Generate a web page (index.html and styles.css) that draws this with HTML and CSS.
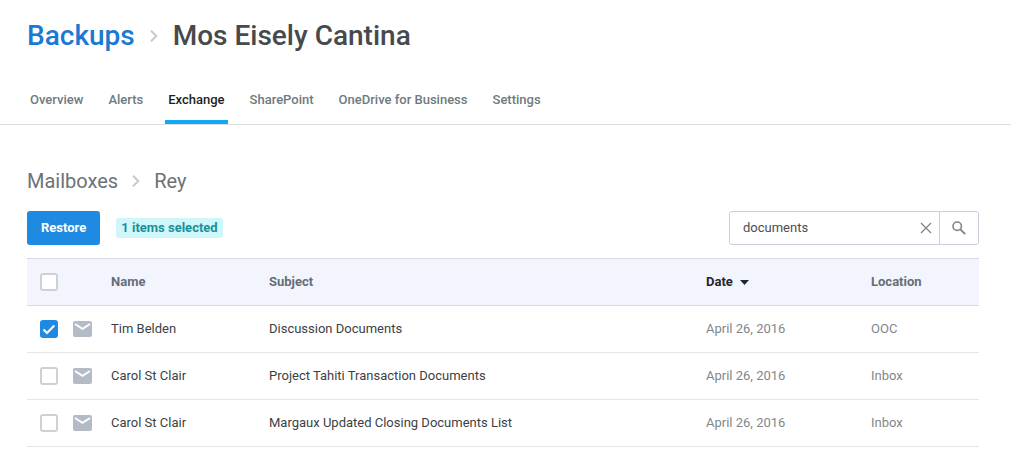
FILE: index.html
```html
<!DOCTYPE html>
<html lang="en">
<head>
    <meta charset="UTF-8">
    <meta name="viewport" content="width=device-width, initial-scale=1.0">
    <title>Mos Eisely Cantina - Exchange</title>
    <link rel="stylesheet" href="styles.css">
</head>
<body>
    <svg class="sprite" aria-hidden="true">
        <symbol id="chevron" viewBox="0 0 8 12">
            <path d="M1 .8L6.300 6 1 11.200" fill="none" stroke="currentColor" stroke-width="2"/>
        </symbol>
        <symbol id="mail" viewBox="0 0 19 16">
            <rect width="19" height="16" rx="2" fill="currentColor"/>
            <path d="M2 3l7.500 4.800L17 3" fill="none" stroke="#fff" stroke-width="1.900"/>
        </symbol>
    </svg>

    <header class="header">
        <div class="title">
            <a href="#">Backups</a>
            <svg class="chevron"><use href="#chevron"/></svg>
            <h1>Mos Eisely Cantina</h1>
        </div>
        <nav class="tabs">
            <a href="#">Overview</a>
            <a href="#">Alerts</a>
            <a href="#" class="active">Exchange</a>
            <a href="#">SharePoint</a>
            <a href="#">OneDrive for Business</a>
            <a href="#">Settings</a>
        </nav>
    </header>

    <main class="content">
        <div class="path">
            <a href="#">Mailboxes</a>
            <svg class="chevron"><use href="#chevron"/></svg>
            <h2>Rey</h2>
        </div>

        <div class="toolbar">
            <button type="button" class="restore-btn">Restore</button>
            <span class="selected">1 items selected</span>
            <form class="search">
                <input type="text" value="documents" aria-label="Search mailbox">
                <button type="button" class="clear-btn" aria-label="Clear">
                    <svg width="12" height="12" viewBox="0 0 12 12"><path d="M1 1l10 10M11 1L1 11" fill="none" stroke="currentColor" stroke-width="1.300"/></svg>
                </button>
                <button type="submit" class="search-btn" aria-label="Search">
                    <svg width="14" height="14" viewBox="0 0 14 14"><circle cx="5.200" cy="5.200" r="4.200" fill="none" stroke="currentColor" stroke-width="1.600"/><path d="M8.300 8.300l4.900 4.900" fill="none" stroke="currentColor" stroke-width="1.900"/></svg>
                </button>
            </form>
        </div>

        <table class="items">
            <thead>
                <tr>
                    <th class="col-check"><input type="checkbox" aria-label="Select all"></th>
                    <th class="col-icon"></th>
                    <th class="col-name">Name</th>
                    <th>Subject</th>
                    <th class="col-date sorted">Date <svg class="arrow" width="9" height="5" viewBox="0 0 9 5"><path d="M0 0h9L4.500 5z" fill="currentColor"/></svg></th>
                    <th class="col-location">Location</th>
                </tr>
            </thead>
            <tbody>
                <tr>
                    <td><input type="checkbox" aria-label="Select Discussion Documents" checked></td>
                    <td><svg class="mail"><use href="#mail"/></svg></td>
                    <td>Tim Belden</td>
                    <td>Discussion Documents</td>
                    <td class="muted">April 26, 2016</td>
                    <td class="muted">OOC</td>
                </tr>
                <tr>
                    <td><input type="checkbox" aria-label="Select Project Tahiti Transaction Documents"></td>
                    <td><svg class="mail"><use href="#mail"/></svg></td>
                    <td>Carol St Clair</td>
                    <td>Project Tahiti Transaction Documents</td>
                    <td class="muted">April 26, 2016</td>
                    <td class="muted">Inbox</td>
                </tr>
                <tr>
                    <td><input type="checkbox" aria-label="Select Margaux Updated Closing Documents List"></td>
                    <td><svg class="mail"><use href="#mail"/></svg></td>
                    <td>Carol St Clair</td>
                    <td>Margaux Updated Closing Documents List</td>
                    <td class="muted">April 26, 2016</td>
                    <td class="muted">Inbox</td>
                </tr>
            </tbody>
        </table>
    </main>
</body>
</html>
```
FILE: styles.css
```css
* {
    box-sizing: border-box;
}
body {
    margin: 0;
    background-color: #fff;
    color: #3c3f45;
    font-family: Roboto, "Liberation Sans", sans-serif;
    font-size: 13px;
    line-height: 16px;
}
a {
    color: inherit;
    text-decoration: none;
}
button, input {
    font: inherit;
}
svg {
    display: block;
}
.sprite {
    display: none;
}
.header {
    padding: 20px 27px 0;
    border-bottom: 1px solid #dcdee0;
}
.title {
    display: flex;
    align-items: center;
    gap: 15px;
    font-size: 28px;
    font-weight: 500;
    line-height: 32px;
}
.title a {
    color: #1a79d4;
}
.title h1 {
    margin: 0;
    font: inherit;
    color: #46494d;
}
.chevron {
    width: 8px;
    height: 12px;
    color: #c6cbd0;
}
.tabs {
    display: flex;
    gap: 19px;
    margin-top: 40px;
    font-weight: 500;
    color: #6f7a80;
}
.tabs a {
    padding: 0 3px 12px;
    border-bottom: 4px solid transparent;
}
.tabs .active {
    color: #1c1e21;
    border-color: #0fa9f5;
}
.content {
    padding: 44px 32px 23px 27px;
}
.path {
    display: flex;
    align-items: center;
    gap: 14px;
    font-size: 20px;
    line-height: 24px;
    color: #6c7278;
}
.path h2 {
    margin: 0;
    font: inherit;
}
.toolbar {
    display: flex;
    align-items: center;
    margin-top: 18px;
}
.restore-btn {
    height: 34px;
    padding: 0 14px;
    background-color: #1e8ae2;
    color: #fff;
    font-weight: 700;
    border: none;
    border-radius: 3px;
}
.selected {
    margin-left: 16px;
    padding: 2px 5px;
    background-color: #cff7fa;
    color: #1a8f9a;
    font-weight: 700;
    border-radius: 3px;
}
.search {
    display: flex;
    width: 250px;
    height: 34px;
    margin-left: auto;
    border: 1px solid #c8cfda;
    border-radius: 3px;
}
.search input {
    flex: 1;
    min-width: 0;
    padding: 0 0 0 13px;
    border: none;
    background: none;
    color: #4a4d52;
    outline: none;
}
.search button {
    display: flex;
    align-items: center;
    justify-content: center;
    padding: 0;
    border: none;
    background: none;
    color: #808588;
}
.search .clear-btn {
    width: 26px;
}
.search .search-btn {
    width: 39px;
    border-left: 1px solid #c8cfda;
}
.items {
    width: 100%;
    margin-top: 13px;
    table-layout: fixed;
    border-collapse: separate;
    border-spacing: 0;
}
.items th, .items td {
    height: 47px;
    padding: 0;
    text-align: left;
    border-bottom: 1px solid #e4e5e8;
}
.items th {
    height: 48px;
    background-color: #f2f5fe;
    color: #686d78;
    font-weight: 700;
    border-top: 1px solid #d5dae6;
    border-bottom-color: #d5dae6;
}
.items .sorted {
    color: #23262d;
}
.items .muted {
    color: #7f878c;
}
.arrow {
    display: inline-block;
    margin-left: 4px;
    vertical-align: middle;
}
.col-check {
    width: 46px;
}
.col-icon {
    width: 38px;
}
.col-name {
    width: 158px;
}
.col-date {
    width: 165px;
}
.col-location {
    width: 108px;
}
.items input {
    display: block;
    appearance: none;
    width: 18px;
    height: 18px;
    margin: 0 0 0 13px;
    background-color: #fff;
    border: 2px solid #cdd1d5;
    border-radius: 3px;
}
.items input:checked {
    border-color: #1e8ae2;
    background: #1e8ae2 url("data:image/svg+xml,%3Csvg xmlns='http://www.w3.org/2000/svg' viewBox='0 0 14 14'%3E%3Cpath d='M1.500 7.500l3.500 3.500L12.300 3.500' fill='none' stroke='white' stroke-width='2'/%3E%3C/svg%3E") center / 14px 14px no-repeat;
}
.mail {
    width: 19px;
    height: 16px;
    color: #b3bcc6;
}
```
